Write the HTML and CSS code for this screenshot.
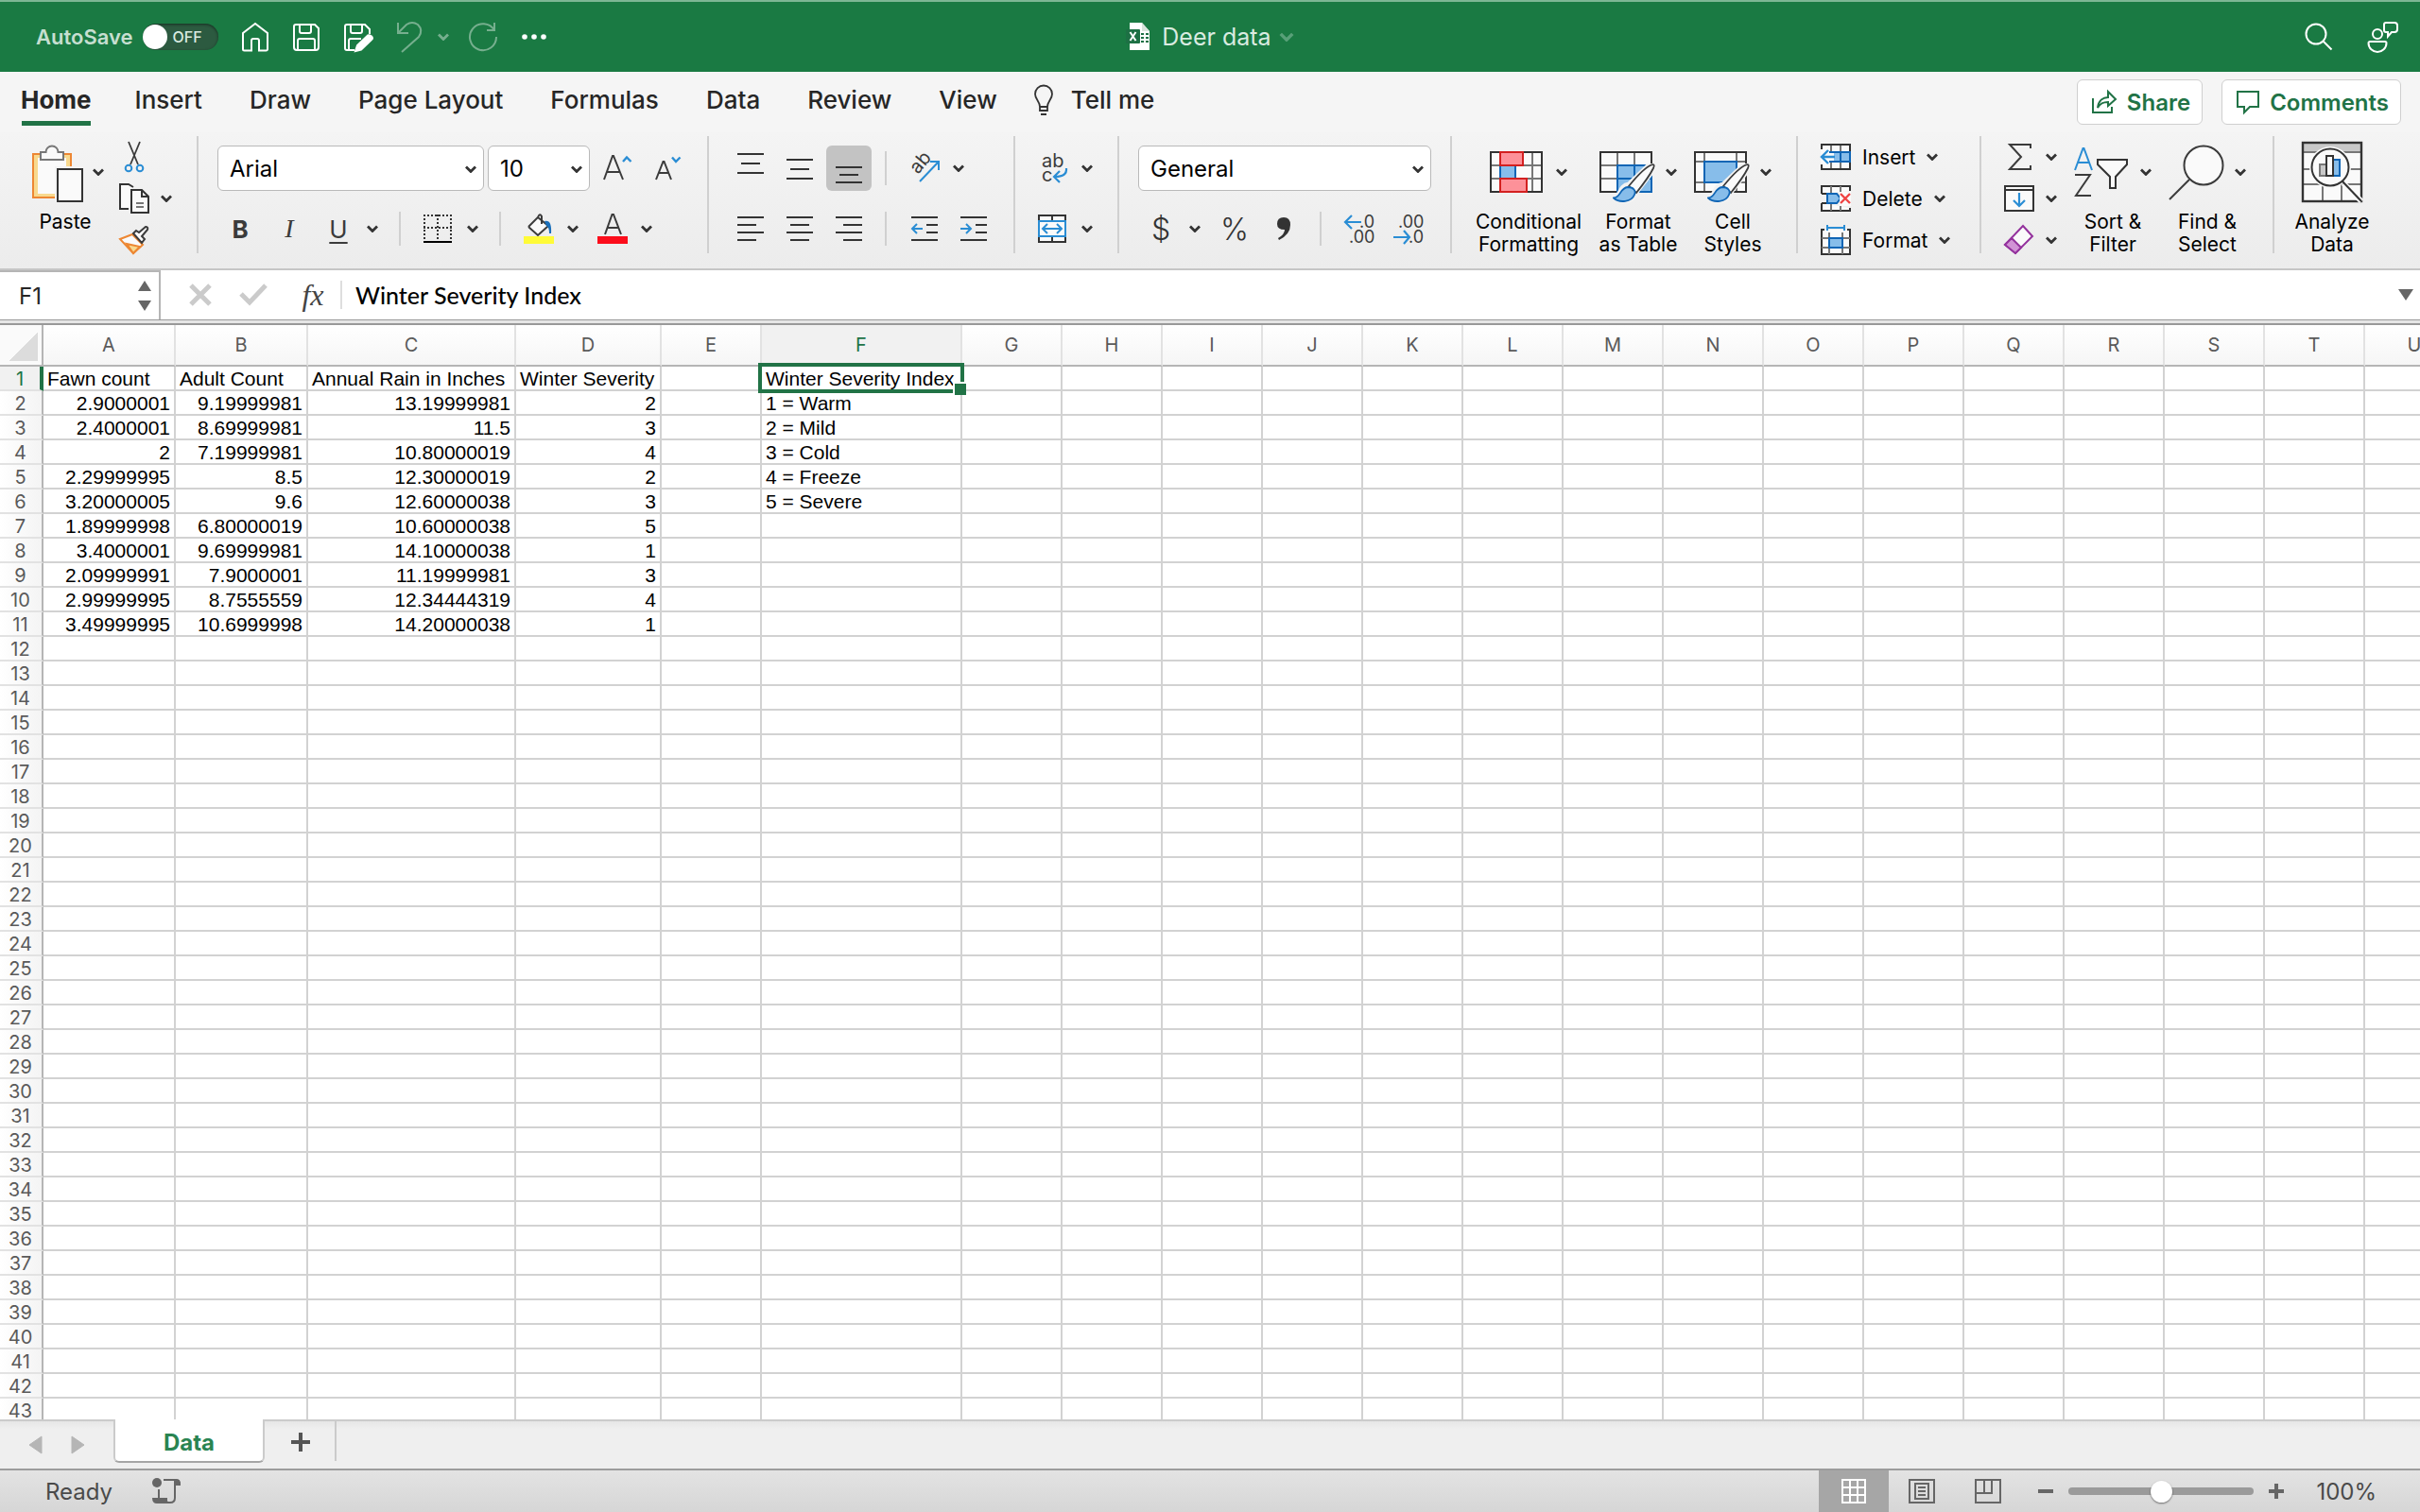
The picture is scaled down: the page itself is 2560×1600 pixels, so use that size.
FILE: index.html
```html
<!DOCTYPE html>
<html lang="en">
<head>
    <meta charset="UTF-8">
    <meta name="viewport" content="width=device-width, initial-scale=1.0">
    <title>Deer data</title>
    <link rel="stylesheet" href="styles.css">
</head>
<body>

<svg class="defs" width="0" height="0" aria-hidden="true">
    <symbol id="chev" viewBox="0 0 12 8"><path d="M1 1.5 6 6.5 11 1.5" fill="none" stroke="currentColor" stroke-width="2.8"/></symbol>
    <symbol id="brush" viewBox="0 0 46 42">
        <path d="M2 36C8 36 7 23 17 22L38 2C44-2 46 2 43 7L26 29C25 40 10 43 2 36z" fill="#f2f2f2" stroke="#f2f2f2" stroke-width="5"/>
        <path d="M17 24C26 13 34 4 41 1.500Q45 0 43 5C40 11 33 21 25 31z" fill="#fafafa" stroke="#3b3b3b" stroke-width="1.800"/>
        <path d="M1 36.500C9 36 7 26 16 25 22 25 25 29 23 33 20 41 7 42 1 36.500z" fill="#87bdea" stroke="#0f65b5" stroke-width="1.800"/>
    </symbol>
</svg>

<header class="titlebar">
    <div class="quick">
        <label class="autosave" for="autosave">AutoSave</label>
        <span class="switch"><input type="checkbox" id="autosave"><span class="switch-text">OFF</span></span>
        <button aria-label="Home"><svg width="30" height="32" viewBox="0 0 30 32"><path d="M2 12 15 2 28 12V29a1.500 1.500 0 0 1-1.500 1.500H19V20a2 2 0 0 0-2-2h-4a2 2 0 0 0-2 2V30.500H3.500A1.500 1.500 0 0 1 2 29z"/></svg></button>
        <button aria-label="Save"><svg width="30" height="32" viewBox="0 0 30 32"><path d="M4 3H24L28 7V27a3 3 0 0 1-3 3H5a3 3 0 0 1-3-3V5a2 2 0 0 1 2-2zM8 3V10a2 2 0 0 0 2 2h8a2 2 0 0 0 2-2V3M6 30V20a2 2 0 0 1 2-2H22a2 2 0 0 1 2 2V30"/></svg></button>
        <button aria-label="Save as"><svg width="32" height="32" viewBox="0 0 32 32"><path d="M12 30H4a2 2 0 0 1-2-2V5a2 2 0 0 1 2-2H23L28 8V13M8 3V10a2 2 0 0 0 2 2h8a2 2 0 0 0 2-2V3M6 30V20a2 2 0 0 1 2-2H19"/><path d="M13 31 15 25 26 14.500Q28 13.500 30 15.500T30 19L19 29.500z" fill="#fff"/></svg></button>
        <button class="dim undo" aria-label="Undo"><svg width="28" height="34" viewBox="0 0 28 34"><path d="M2 2V13H13M2 13 11 4Q17 0 23 4 29 10 24 17L6 33"/></svg><svg class="chev"><use href="#chev"/></svg></button>
        <button class="dim" aria-label="Redo"><svg width="32" height="32" viewBox="0 0 32 32"><path d="M28 1V9H20M28 9A14 14 0 1 0 30 16"/></svg></button>
        <button aria-label="More"><svg width="28" height="8" viewBox="0 0 28 8"><g fill="#fff" stroke="none"><circle cx="4" cy="4" r="2.800"/><circle cx="14" cy="4" r="2.800"/><circle cx="24" cy="4" r="2.800"/></g></svg></button>
    </div>
    <div class="doc-title">
        <svg width="26" height="32" viewBox="0 0 26 32"><path d="M4 1H17L25 10V30H4z" fill="#fff" stroke="none"/><path d="M17 1V10H25z" fill="#d8e4dc" stroke="none"/><path d="M16 13h3M21 13h3M16 17h3M21 17h3M16 21h3M21 21h3" stroke="#1d7044" stroke-width="2"/><rect x="0" y="8" width="15" height="15" rx="1" fill="#1d7044" stroke="none"/><path d="M4.500 11 10.500 20M10.500 11 4.500 20" stroke="#fff" stroke-width="2"/></svg>
        <span>Deer data</span>
        <svg class="title-chev"><use href="#chev"/></svg>
    </div>
    <div class="account">
        <button aria-label="Search"><svg width="30" height="30" viewBox="0 0 30 30"><circle cx="12" cy="12" r="10.500"/><path d="M19.500 19.500 28.500 28.500"/></svg></button>
        <button aria-label="Presence"><svg width="34" height="34" viewBox="0 0 34 34"><circle cx="11" cy="14" r="5"/><path d="M3 22H19a1.500 1.500 0 0 1 1.500 1.500C20.500 29 16 33 11 33S1.500 29 1.500 23.500A1.500 1.500 0 0 1 3 22zM20 2H29a3 3 0 0 1 3 3V9a3 3 0 0 1-3 3H26L22 16.500V12H20a2 2 0 0 1-2-2V4a2 2 0 0 1 2-2z"/></svg></button>
    </div>
</header>

<nav class="tabs">
    <button class="tab active">Home</button>
    <button class="tab">Insert</button>
    <button class="tab">Draw</button>
    <button class="tab">Page Layout</button>
    <button class="tab">Formulas</button>
    <button class="tab">Data</button>
    <button class="tab">Review</button>
    <button class="tab">View</button>
    <button class="tab tell"><svg width="22" height="34" viewBox="0 0 22 34"><path d="M7 24C7 18 2 16 2 10.500a9 9 0 0 1 18 0C20 16 15 18 15 24zM7 24v4h8v-4M8 32h6" fill="none" stroke="#333" stroke-width="1.800"/></svg>Tell me</button>
    <div class="tab-actions">
        <button class="pill"><svg width="28" height="26" viewBox="0 0 28 26"><path d="M2 9V24H22V18M7 19C8 11 13 8 18 8V2L26 10 18 17V13C13 13 10 14 7 19z"/></svg>Share</button>
        <button class="pill"><svg width="26" height="26" viewBox="0 0 26 26"><path d="M2 2H24V18H15L9 24V18H2z"/></svg>Comments</button>
    </div>
</nav>

<section class="ribbon">
    <div class="group group-clipboard">
        <button class="big">
            <span class="big-icon">
                <svg width="60" height="64" viewBox="0 0 60 64"><rect x="7" y="13" width="40" height="46" fill="#f8d98e" stroke="#ed8733" stroke-width="2"/><rect x="12" y="17" width="30" height="38" fill="#fafafa"/><path d="M15 19H39V11H33.500A6 6 0 0 0 20.500 11H15z" fill="#fafafa" stroke="#777" stroke-width="2"/><rect x="30" y="26" width="30" height="38" fill="#f3f3f3"/><rect x="33" y="29" width="26" height="34" fill="#fafafa" stroke="#333" stroke-width="2"/></svg>
                <svg class="chev"><use href="#chev"/></svg>
            </span>
            Paste
        </button>
        <div class="stack">
            <button aria-label="Cut"><svg width="32" height="32" viewBox="0 0 32 32" fill="none"><path d="M10 0 20 24M22 0 12 24" stroke="#3b3b3b" stroke-width="1.800"/><circle cx="10" cy="28" r="3.300" stroke="#2a8dd4" stroke-width="2"/><circle cx="22" cy="28" r="3.300" stroke="#2a8dd4" stroke-width="2"/></svg></button>
            <button aria-label="Copy"><svg width="32" height="32" viewBox="0 0 32 32" fill="none" stroke="#333" stroke-width="2"><path d="M10 27H1V1H10L15 4" fill="#fafafa"/><path d="M13 7H24L31 14V31H13z" fill="#fafafa"/><path d="M24 7V14H31"/><path d="M18 21H26M18 25H26" stroke="#777"/></svg><svg class="chev"><use href="#chev"/></svg></button>
            <button aria-label="Format painter"><svg width="32" height="32" viewBox="0 0 32 32" fill="none" stroke-width="2"><path d="M1 15 14 10 25 21 15 30z" fill="#fafafa" stroke="#ed8733"/><path d="M8 20 22 23 15 30z" fill="#f8d98e" stroke="#ed8733"/><path d="M15 9 18 6 21 8 28 2Q31 2 30 5L24 12 27 15 24 19z" fill="#fafafa" stroke="#3b3b3b"/></svg></button>
        </div>
    </div>

    <div class="group group-font rows">
        <div class="row">
            <span class="pick pick-font"><select aria-label="Font"><option>Arial</option></select><svg class="chev"><use href="#chev"/></svg></span>
            <span class="pick pick-size"><select aria-label="Font size"><option>10</option></select><svg class="chev"><use href="#chev"/></svg></span>
            <button class="tool" aria-label="Increase font size"><svg width="32" height="32" viewBox="0 0 32 32" fill="none"><path d="M3 28 12 3H13L23 28M6 20H19" stroke="#3b3b3b" stroke-width="2"/><path d="M23 9 27 4.500 31.500 9" stroke="#2a8dd4" stroke-width="2.400"/></svg></button>
            <button class="tool" aria-label="Decrease font size"><svg width="32" height="32" viewBox="0 0 32 32" fill="none"><path d="M6 28 13.500 9H14.500L22 28M9 21H19" stroke="#3b3b3b" stroke-width="2"/><path d="M23 4.500 27 9 31.500 4.500" stroke="#2a8dd4" stroke-width="2.400"/></svg></button>
        </div>
        <div class="row">
            <button class="tool letter bold">B</button>
            <button class="tool letter italic">I</button>
            <button class="split"><span class="letter underline">U</span><svg class="chev"><use href="#chev"/></svg></button>
            <span class="bar"></span>
            <button class="split" aria-label="Borders"><svg width="32" height="32" viewBox="0 0 32 32" fill="none" stroke="#333" stroke-width="2"><path d="M0 2H30M0 15H30M1 1V28M15 1V28M29 1V28" stroke-dasharray="2 2"/><path d="M0 30H30" stroke="#000"/></svg><svg class="chev"><use href="#chev"/></svg></button>
            <span class="bar"></span>
            <button class="split" aria-label="Fill color"><svg width="32" height="32" viewBox="0 0 32 32"><path d="M5 14 15 4Q17-1 19 3V11M15 4 26 13 15 23 5 14" fill="#fafafa" stroke="#3b3b3b" stroke-width="2"/><path d="M22 8Q30 6 29 21L27 21Q27 14 24 13z" fill="#1a6fba"/><rect y="24" width="32" height="8" fill="#fffb38"/></svg><svg class="chev"><use href="#chev"/></svg></button>
            <button class="split" aria-label="Font color"><svg width="32" height="32" viewBox="0 0 32 32"><path d="M8 22 15.500 1H17L25 22M11 15H22" fill="none" stroke="#3b3b3b" stroke-width="2"/><rect y="24" width="32" height="8" fill="#fc0d1b"/></svg><svg class="chev"><use href="#chev"/></svg></button>
        </div>
    </div>

    <div class="group group-align rows">
        <div class="row">
            <button class="tool" aria-label="Top align"><svg class="lines" viewBox="0 0 28 32"><path d="M0 1H28M4 11H24M0 21H28"/></svg></button>
            <button class="tool" aria-label="Middle align"><svg class="lines" viewBox="0 0 28 32"><path d="M0 7H28M4 17H24M0 27H28"/></svg></button>
            <button class="tool pressed" aria-label="Bottom align"><svg class="lines" viewBox="0 0 28 32"><path d="M0 15H28M4 23H24M0 31H28"/></svg></button>
            <span class="bar"></span>
            <button class="split" aria-label="Orientation"><svg width="32" height="32" viewBox="0 0 32 32"><text transform="translate(9 23) rotate(-50)" class="ab">ab</text><path d="M11 30 31 9M22 9H31V18" fill="none" stroke="#2a8dd4" stroke-width="2"/></svg><svg class="chev"><use href="#chev"/></svg></button>
        </div>
        <div class="row">
            <button class="tool" aria-label="Align left"><svg class="lines" viewBox="0 0 28 32"><path d="M0 4H28M0 12H20M0 20H28M0 28H20"/></svg></button>
            <button class="tool" aria-label="Center"><svg class="lines" viewBox="0 0 28 32"><path d="M0 4H28M4 12H24M0 20H28M4 28H24"/></svg></button>
            <button class="tool" aria-label="Align right"><svg class="lines" viewBox="0 0 28 32"><path d="M0 4H28M8 12H28M0 20H28M8 28H28"/></svg></button>
            <span class="bar"></span>
            <button class="tool" aria-label="Decrease indent"><svg class="lines" viewBox="0 0 28 32"><path d="M0 4H28M16 12H28M16 20H28M0 28H28"/><path class="blue" d="M12 16H1M6 11 1 16 6 21"/></svg></button>
            <button class="tool" aria-label="Increase indent"><svg class="lines" viewBox="0 0 28 32"><path d="M0 4H28M16 12H28M16 20H28M0 28H28"/><path class="blue" d="M0 16H11M6 11 11 16 6 21"/></svg></button>
        </div>
    </div>

    <div class="group group-wrap rows">
        <div class="row">
            <button class="split" aria-label="Wrap text"><svg width="32" height="32" viewBox="0 0 32 32"><text x="4" y="15" class="ab">ab</text><text x="4" y="30" class="ab">c</text><path d="M30 16Q31 25 18 25M23 19 17 25 23 31" fill="none" stroke="#2a8dd4" stroke-width="2.200"/></svg><svg class="chev"><use href="#chev"/></svg></button>
        </div>
        <div class="row">
            <button class="split" aria-label="Merge"><svg width="32" height="32" viewBox="0 0 32 32" fill="none" stroke="#333" stroke-width="2"><path d="M1 2H29V30H1zM15 2V8M15 24V30" fill="#fafafa"/><rect x="1" y="8" width="28" height="16" fill="#fafafa" stroke="#2a8dd4"/><path d="M5 16H25M10 11 5 16 10 21M20 11 25 16 20 21" stroke="#2a8dd4"/></svg><svg class="chev"><use href="#chev"/></svg></button>
        </div>
    </div>

    <div class="group group-number rows">
        <div class="row">
            <span class="pick pick-number"><select aria-label="Number format"><option>General</option></select><svg class="chev"><use href="#chev"/></svg></span>
        </div>
        <div class="row">
            <button class="split"><span class="symbol">$</span><svg class="chev"><use href="#chev"/></svg></button>
            <button class="tool symbol">%</button>
            <button class="tool" aria-label="Comma style"><svg width="16" height="26" viewBox="0 0 16 26"><path d="M8 1Q15 1 15 9 15 19 3 25L2 23Q9 19 9 14 1 14 1 8 1 1 8 1z" fill="#333"/></svg></button>
            <span class="bar"></span>
            <button class="tool" aria-label="Increase decimal"><svg width="32" height="32" viewBox="0 0 32 32"><text x="16" y="15" class="dec">.0</text><text x="5" y="31" class="dec">.00</text><path d="M18 9H1M8 2 1 9 8 16" fill="none" stroke="#2a8dd4" stroke-width="2.200"/></svg></button>
            <button class="tool" aria-label="Decrease decimal"><svg width="32" height="32" viewBox="0 0 32 32"><text x="5" y="15" class="dec">.00</text><text x="16" y="31" class="dec">.0</text><path d="M0 25H17M11 18 17 25 11 32" fill="none" stroke="#2a8dd4" stroke-width="2.200"/></svg></button>
        </div>
    </div>

    <div class="group group-styles">
        <button class="big wide">
            <span class="big-icon">
                <svg width="60" height="64" viewBox="0 0 60 64" fill="none" stroke-width="2"><rect x="1" y="11" width="54" height="42" fill="#fafafa"/><path d="M1 25H55M1 39H55M11 11V53M45 11V53" stroke="#777"/><rect x="1" y="11" width="54" height="42" stroke="#333"/><rect x="11" y="25" width="16" height="14" fill="#87bdea" stroke="#0f65b5"/><rect x="11" y="11" width="24" height="14" fill="#fd9199" stroke="#d32020"/><rect x="11" y="39" width="28" height="14" fill="#fd9199" stroke="#d32020"/></svg>
                <svg class="chev"><use href="#chev"/></svg>
            </span>
            Conditional<br>Formatting
        </button>
        <button class="big">
            <span class="big-icon">
                <svg width="60" height="64" viewBox="0 0 60 64" fill="none" stroke-width="2"><rect x="1" y="11" width="54" height="42" fill="#fafafa"/><path d="M1 25H55M1 39H19M19 11V25M37 11V25" stroke="#777"/><rect x="1" y="11" width="54" height="42" stroke="#333"/><path d="M19 25H55V53H19zM37 25V53M19 39H55" fill="#87bdea" stroke="#0f65b5"/><use href="#brush" x="14" y="23" width="46" height="42"/></svg>
                <svg class="chev"><use href="#chev"/></svg>
            </span>
            Format<br>as Table
        </button>
        <button class="big">
            <span class="big-icon">
                <svg width="60" height="64" viewBox="0 0 60 64" fill="none" stroke-width="2"><rect x="1" y="11" width="54" height="42" fill="#fafafa"/><path d="M1 21H55M1 43H55M11 11V53M45 11V53" stroke="#777"/><rect x="1" y="11" width="54" height="42" stroke="#333"/><rect x="11" y="21" width="34" height="22" fill="#87bdea" stroke="#0f65b5"/><use href="#brush" x="14" y="23" width="46" height="42"/></svg>
                <svg class="chev"><use href="#chev"/></svg>
            </span>
            Cell<br>Styles
        </button>
    </div>

    <div class="group group-cells">
        <div class="stack">
            <button><svg width="32" height="32" viewBox="0 0 32 32" fill="none" stroke-width="2"><rect x="1" y="3" width="30" height="26" fill="#fafafa"/><path d="M11 3V29M21 3V29" stroke="#777"/><rect x="1" y="3" width="30" height="26" stroke="#333"/><rect x="10" y="11" width="21" height="10" fill="#87bdea" stroke="#0f65b5"/><path d="M21 11V21" stroke="#0f65b5"/><path d="M0 8H9V12H14V20H9V24H0z" fill="#fafafa"/><path d="M15 16H1M8 9 1 16 8 23" stroke="#2a8dd4" stroke-width="2.400"/></svg>Insert<svg class="chev"><use href="#chev"/></svg></button>
            <button><svg width="32" height="32" viewBox="0 0 32 32" fill="none" stroke-width="2"><path d="M1 11V3H31V8M1 21V29H31V26" fill="#fafafa" stroke="#333"/><path d="M11 3V29M21 3V29" stroke="#777"/><path d="M1 11H8M1 21H8" stroke="#333"/><path d="M7 11H17L21 16 17 21H7z" fill="#87bdea" stroke="#0f65b5"/><path d="M20 9H32V24H20z" fill="#fafafa"/><path d="M21 11 31 21M31 11 21 21" stroke="#ef4444" stroke-width="2.400"/></svg>Delete<svg class="chev"><use href="#chev"/></svg></button>
            <button><svg width="32" height="32" viewBox="0 0 32 32" fill="none" stroke-width="2"><path d="M4 5H1V31H31V5H28" fill="#fafafa" stroke="#333"/><path d="M1 14H31M1 24H31M9 8V31M23 8V31" stroke="#777"/><rect x="9" y="14" width="14" height="10" fill="#87bdea" stroke="#0f65b5"/><path d="M7 0V6M25 0V6M7 3H25" stroke="#2a8dd4"/></svg>Format<svg class="chev"><use href="#chev"/></svg></button>
        </div>
    </div>

    <div class="group group-editing">
        <div class="stack">
            <button aria-label="AutoSum"><svg width="32" height="32" viewBox="0 0 32 32" fill="none" stroke="#3b3b3b" stroke-width="2"><path d="M28 7V3H6L18 16 6 29H28V25"/></svg><svg class="chev"><use href="#chev"/></svg></button>
            <button aria-label="Fill"><svg width="32" height="32" viewBox="0 0 32 32" fill="none" stroke="#333" stroke-width="2"><rect x="1" y="3" width="30" height="26" fill="#fafafa"/><path d="M1 7H31"/><path d="M16 10V24M10 18 16 24 22 18" stroke="#2a8dd4" stroke-width="2.200"/></svg><svg class="chev"><use href="#chev"/></svg></button>
            <button aria-label="Clear"><svg width="32" height="32" viewBox="0 0 32 32" stroke="#94329d" stroke-width="2"><path d="M20 1 30 12 12 30 1 21z" fill="#fafafa"/><path d="M8 14 18 24 12 30 1 21z" fill="#d193d5"/></svg><svg class="chev"><use href="#chev"/></svg></button>
        </div>
        <button class="big">
            <span class="big-icon">
                <svg width="60" height="64" viewBox="0 0 60 64" fill="none" stroke-width="2"><path d="M1 30 9.500 7H10.500L19 30M4 22H16" stroke="#2a8dd4"/><path d="M1 35H17L2 57H18" stroke="#3b3b3b"/><path d="M25 19H56V24L44 37V49H38V37L25 24z" fill="#fafafa" stroke="#333"/></svg>
                <svg class="chev"><use href="#chev"/></svg>
            </span>
            Sort &amp;<br>Filter
        </button>
        <button class="big">
            <span class="big-icon">
                <svg width="60" height="64" viewBox="0 0 60 64" stroke="#3b3b3b" stroke-width="2"><circle cx="37" cy="25" r="20.500" fill="#fafafa"/><path d="M22 40 1 61"/></svg>
                <svg class="chev"><use href="#chev"/></svg>
            </span>
            Find &amp;<br>Select
        </button>
    </div>

    <div class="group group-analyze">
        <button class="big">
            <span class="big-icon">
                <svg width="64" height="64" viewBox="0 0 64 64" fill="none" stroke-width="2"><rect x="1" y="1" width="62" height="62" fill="#fafafa"/><rect x="1" y="1" width="62" height="10" fill="#c8c8c8"/><path d="M1 11H63M1 29H63M1 45H63M22 45V63M42 45V63" stroke="#777"/><rect x="1" y="1" width="62" height="62" stroke="#333" stroke-width="2.400"/><circle cx="30" cy="27" r="22" fill="#fafafa"/><path d="M44 44 63 63" stroke="#fafafa" stroke-width="6"/><circle cx="30" cy="27" r="19.500" stroke="#333"/><path d="M43 42 63 63" stroke="#333"/><path d="M19 24H26V36H19z" fill="#c8c8c8" stroke="#777"/><path d="M33 19H40V36H33z" fill="#87bdea" stroke="#0f65b5"/><path d="M26 15H33V36H26z" fill="#fafafa" stroke="#333"/></svg>
            </span>
            Analyze<br>Data
        </button>
    </div>
</section>

<section class="formula-bar">
    <div class="name-box">
        <input type="text" aria-label="Name box" value="F1">
        <svg width="14" height="34" viewBox="0 0 14 34"><path d="M7 1 14 12H0zM7 33 14 22H0z" fill="#666"/></svg>
    </div>
    <button aria-label="Cancel"><svg width="24" height="24" viewBox="0 0 24 24"><path d="M2 2 22 22M22 2 2 22" stroke="#cbcbcb" stroke-width="5"/></svg></button>
    <button aria-label="Enter"><svg width="30" height="24" viewBox="0 0 30 24"><path d="M2 11 11 20 28 2" fill="none" stroke="#cbcbcb" stroke-width="5"/></svg></button>
    <button class="fx">fx</button>
    <input class="formula" type="text" aria-label="Formula" value="Winter Severity Index">
    <button class="expand" aria-label="Expand"><svg width="16" height="12" viewBox="0 0 16 12"><path d="M0 0H16L8 12z" fill="#666"/></svg></button>
</section>

<main class="sheet">
    <table class="grid" id="grid"></table>
</main>

<footer>
    <div class="sheets">
        <button class="nav-arrow" aria-label="Previous sheet"><svg width="14" height="20" viewBox="0 0 14 20"><path d="M14 1V19L1 10z" fill="#b5b5b5" stroke="#b5b5b5"/></svg></button>
        <button class="nav-arrow" aria-label="Next sheet"><svg width="14" height="20" viewBox="0 0 14 20"><path d="M0 1V19L13 10z" fill="#b5b5b5" stroke="#b5b5b5"/></svg></button>
        <button class="sheet-tab">Data</button>
        <button class="add" aria-label="New sheet"><svg width="20" height="20" viewBox="0 0 20 20"><path d="M10 0V20M0 10H20" stroke="#555" stroke-width="4"/></svg></button>
    </div>
    <div class="status">
        <span class="ready">Ready</span>
        <svg width="30" height="30" viewBox="0 0 30 30"><circle cx="5" cy="6" r="5" fill="#666"/><path d="M12 3H26Q29 3 29 8H24V22Q24 27 19 27H6M7 13V24" fill="none" stroke="#666" stroke-width="2"/><path d="M0 22H16V25Q17 28 19 28H5Q0 28 0 22zM23 3Q30 1 30 8H23z" fill="#666"/></svg>
        <div class="views">
            <button class="view active" aria-label="Normal view"><svg width="28" height="28" viewBox="0 0 28 28"><path d="M2 2H26V26H2zM10 2V26M18 2V26M2 10H26M2 18H26" fill="none" stroke="#fff" stroke-width="2"/></svg></button>
            <button class="view" aria-label="Page layout view"><svg width="28" height="28" viewBox="0 0 28 28"><path d="M1 2H27V26H1zM7 6H21V22H7zM10 10H18M10 14H18M10 18H18" fill="none" stroke="#666" stroke-width="2"/></svg></button>
            <button class="view" aria-label="Page break view"><svg width="28" height="28" viewBox="0 0 28 28"><path d="M1 2H27V26H1zM1 16H18V2M10 2V16" fill="none" stroke="#666" stroke-width="2"/></svg></button>
        </div>
        <div class="zoom">
            <button aria-label="Zoom out"><svg width="16" height="16" viewBox="0 0 16 16"><path d="M0 8H16" stroke="#666" stroke-width="4"/></svg></button>
            <input type="range" aria-label="Zoom" min="0" max="200" value="100">
            <button aria-label="Zoom in"><svg width="16" height="16" viewBox="0 0 16 16"><path d="M0 8H16M8 0V16" stroke="#666" stroke-width="4"/></svg></button>
            <span class="percent">100%</span>
        </div>
    </div>
</footer>

<script>
    const letters = "ABCDEFGHIJKLMNOPQRSTUVWXYZ".split("");
    const widths = { A: 140, B: 140, C: 220, D: 154, F: 212 };
    const rowCount = 60;
    const data = [
        ["Fawn count", "Adult Count", "Annual Rain in Inches", "Winter Severity", "", "Winter Severity Index"],
        ["2.9000001", "9.19999981", "13.19999981", "2", "", "1 = Warm"],
        ["2.4000001", "8.69999981", "11.5", "3", "", "2 = Mild"],
        ["2", "7.19999981", "10.80000019", "4", "", "3 = Cold"],
        ["2.29999995", "8.5", "12.30000019", "2", "", "4 = Freeze"],
        ["3.20000005", "9.6", "12.60000038", "3", "", "5 = Severe"],
        ["1.89999998", "6.80000019", "10.60000038", "5"],
        ["3.4000001", "9.69999981", "14.10000038", "1"],
        ["2.09999991", "7.9000001", "11.19999981", "3"],
        ["2.99999995", "8.7555559", "12.34444319", "4"],
        ["3.49999995", "10.6999998", "14.20000038", "1"]
    ];

    let html = '<colgroup><col style="width:46px">';
    letters.forEach(l => { html += `<col style="width:${widths[l] || 106}px">`; });
    html += '</colgroup><thead><tr><th class="corner"></th>';
    letters.forEach(l => { html += `<th scope="col"${l === "F" ? ' class="current"' : ''}>${l}</th>`; });
    html += '</tr></thead><tbody>';

    for (let r = 0; r < rowCount; r++) {
        html += `<tr><th scope="row"${r === 0 ? ' class="current"' : ''}>${r + 1}</th>`;
        letters.forEach((l, c) => {
            const value = (data[r] && data[r][c]) || "";
            let cls = "";
            if (value !== "" && !isNaN(value)) cls = ' class="num"';
            if (r === 0 && l === "F") cls = ' class="selected"';
            html += `<td${cls}>${value}</td>`;
        });
        html += '</tr>';
    }
    document.getElementById("grid").innerHTML = html + '</tbody>';
</script>
</body>
</html>
```
FILE: styles.css
```css
* {
    box-sizing: border-box;
}
body {
    display: flex;
    flex-direction: column;
    height: 100vh;
    margin: 0;
    overflow: hidden;
    font-family: Inter, "Liberation Sans", sans-serif;
    font-size: 21px;
    color: #000;
    background-color: #fff;
}
button, input, select {
    font: inherit;
    color: inherit;
    margin: 0;
    padding: 0;
    border: none;
    background: none;
}
svg {
    display: block;
    flex: none;
    overflow: visible;
}
.defs {
    position: absolute;
}
.chev {
    width: 12px;
    height: 8px;
    color: #333;
}

/* title bar */
.titlebar {
    display: grid;
    grid-template-columns: 1fr auto 1fr;
    align-items: center;
    height: 76px;
    border-top: 2px solid #7db794;
    background-color: #1a7a43;
    color: #d9ebe0;
}
.titlebar svg {
    fill: none;
    stroke: #fff;
    stroke-width: 2;
}
.quick {
    display: flex;
    align-items: center;
    gap: 24px;
    padding-left: 38px;
}
.autosave {
    font-size: 22px;
    font-weight: 600;
    color: #c6dfd0;
    margin-right: -14px;
}
.switch {
    position: relative;
    width: 80px;
    height: 28px;
}
.switch input {
    appearance: none;
    display: block;
    width: 80px;
    height: 28px;
    border-radius: 14px;
    background-color: #2c5a40;
    box-shadow: inset 0 1px 3px rgba(0, 0, 0, 0.5);
}
.switch input::before {
    content: "";
    display: block;
    width: 26px;
    height: 26px;
    margin-top: 1px;
    border-radius: 50%;
    background-color: #fff;
}
.switch-text {
    position: absolute;
    top: 4px;
    left: 32px;
    font-size: 16px;
    line-height: 20px;
    font-weight: 500;
}
.dim {
    opacity: 0.4;
}
.undo {
    display: flex;
    align-items: center;
    gap: 16px;
    margin-right: -4px;
}
.undo .chev {
    color: #fff;
}
.titlebar .chev, .titlebar .title-chev {
    stroke: none;
}
.doc-title {
    display: flex;
    align-items: center;
    gap: 12px;
    font-size: 25px;
}
.title-chev {
    width: 16px;
    height: 10px;
    margin-left: -4px;
    color: #58a078;
}
.account {
    display: flex;
    justify-content: flex-end;
    align-items: center;
    gap: 36px;
    padding-right: 22px;
}

/* tabs */
.tabs {
    display: flex;
    align-items: flex-start;
    gap: 50px;
    height: 64px;
    padding: 8px 20px 0 22px;
    background-color: #f5f5f5;
}
.tab {
    height: 44px;
    font-size: 26px;
    font-weight: 500;
    line-height: 40px;
    color: #262626;
}
.tab.active {
    margin-right: -4px;
    font-weight: 700;
    box-shadow: 0 6px 0 -1px #217346;
}
.tell {
    display: flex;
    align-items: center;
    gap: 18px;
    margin-left: -12px;
}
.tab-actions {
    display: flex;
    gap: 20px;
    margin-left: auto;
}
.pill {
    display: flex;
    align-items: center;
    gap: 10px;
    height: 48px;
    padding: 0 12px 0 14px;
    border: 1px solid #cfcfcf;
    border-radius: 6px;
    background-color: #fff;
    font-size: 24px;
    font-weight: 600;
    color: #217346;
}
.pill svg {
    fill: none;
    stroke: #217346;
    stroke-width: 2;
}

/* ribbon */
.ribbon {
    display: flex;
    height: 146px;
    padding-top: 4px;
    border-bottom: 2px solid #c6c6c6;
    background: linear-gradient(#f4f4f4, #ececec);
}
.group {
    display: flex;
    flex: none;
    gap: 18px;
    height: 124px;
    border-right: 2px solid #d0d0d0;
}
.group-clipboard {
    gap: 16px;
    width: 210px;
    padding-left: 28px;
}
.group-font {
    width: 540px;
    padding-left: 20px;
}
.group-align {
    width: 324px;
    padding-left: 20px;
}
.group-wrap {
    width: 110px;
    padding-left: 16px;
}
.group-number {
    width: 352px;
    padding-left: 20px;
}
.group-styles {
    width: 366px;
    padding-left: 24px;
}
.group-cells {
    width: 194px;
    padding-left: 24px;
}
.group-editing {
    width: 310px;
    padding-left: 24px;
}
.group-analyze {
    padding-left: 20px;
    border-right: none;
}
.rows {
    flex-direction: column;
    gap: 16px;
    padding-top: 10px;
}
.row {
    display: flex;
    flex: none;
    align-items: center;
    gap: 4px;
    height: 48px;
}
.tool, .split {
    display: flex;
    align-items: center;
    justify-content: center;
    width: 48px;
    height: 48px;
    border-radius: 6px;
}
.split {
    justify-content: flex-start;
    gap: 14px;
    width: 74px;
    padding-left: 8px;
}
.pressed {
    background-color: #c3c3c3;
}
.bar {
    width: 2px;
    height: 36px;
    margin: 0 12px 0 10px;
    background-color: #d0d0d0;
}
.letter {
    font-size: 26px;
    color: #3b3b3b;
}
.bold {
    font-weight: 700;
}
.italic {
    font-family: "Liberation Serif", serif;
    font-size: 28px;
    font-style: italic;
}
.underline {
    width: 32px;
    text-align: center;
    text-decoration: underline;
    text-underline-offset: 4px;
}
.symbol {
    min-width: 32px;
    font-size: 32px;
    font-weight: 300;
    text-align: center;
    color: #333;
}
.lines {
    width: 28px;
    height: 32px;
    fill: none;
    stroke: #333;
    stroke-width: 2;
}
.lines .blue {
    stroke: #2a8dd4;
}
.ab {
    font-size: 20px;
    fill: #3b3b3b;
}
.dec {
    font-size: 18px;
    fill: #3b3b3b;
}
.pick {
    position: relative;
    height: 48px;
}
.pick select {
    appearance: none;
    width: 100%;
    height: 48px;
    padding: 0 12px;
    border: 1px solid #b9b9b9;
    border-radius: 6px;
    background-color: #fff;
    font-size: 24px;
}
.pick .chev {
    position: absolute;
    top: 21px;
    right: 8px;
    pointer-events: none;
}
.pick-font {
    width: 282px;
}
.pick-size {
    width: 108px;
}
.pick-number {
    width: 310px;
}
.big {
    display: flex;
    flex-direction: column;
    align-items: center;
    width: 82px;
    padding-top: 6px;
    line-height: 24px;
    white-space: nowrap;
}
.big.wide {
    width: 114px;
}
.big-icon {
    display: flex;
    align-items: center;
    gap: 10px;
    margin-bottom: 9px;
}
.stack {
    display: flex;
    flex-direction: column;
}
.stack button {
    display: flex;
    flex: none;
    align-items: center;
    gap: 12px;
    height: 44px;
}

/* formula bar */
.formula-bar {
    display: flex;
    align-items: center;
    height: 58px;
    padding-bottom: 6px;
    background: linear-gradient(#fff 52px, #999 52px, #999 53px, #e6e6e6 53px, #e6e6e6 56px, #999 56px);
}
.formula-bar button {
    display: flex;
    justify-content: center;
    width: 56px;
}
.name-box {
    display: flex;
    align-items: center;
    width: 170px;
    height: 52px;
    margin-right: 14px;
    padding: 0 8px 0 20px;
    border: 2px solid #b5b5b5;
    border-left: none;
    border-bottom: none;
}
.name-box input {
    flex: 1;
    min-width: 0;
    font-size: 24px;
    color: #262626;
}
.formula-bar .fx {
    width: 64px;
    padding-left: 6px;
    font-family: "Liberation Serif", serif;
    font-size: 32px;
    font-style: italic;
    line-height: 32px;
    color: #444;
}
.formula {
    flex: 1;
    height: 30px;
    padding-left: 14px;
    border-left: 2px solid #dedede;
    font-family: Lato, sans-serif;
    font-size: 25px;
    font-weight: 500;
}
.formula-bar .expand {
    width: 30px;
}

/* sheet */
.sheet {
    flex: 1;
    min-height: 0;
    overflow: hidden;
}
.grid {
    table-layout: fixed;
    width: 1px;
    border-spacing: 0;
    font-family: "Liberation Sans", Arial, sans-serif;
    font-size: 21px;
    line-height: 22px;
}
.grid th {
    padding: 0;
    font-family: Inter, sans-serif;
    font-size: 20px;
    font-weight: 400;
    color: #5a5a5a;
}
.grid thead th {
    height: 44px;
    border-right: 2px solid #e2e2e2;
    border-bottom: 2px solid #b5b5b5;
    background: linear-gradient(#fff, #f6f6f6);
}
.grid thead .corner {
    border-right-color: #b5b5b5;
    background: linear-gradient(135deg, transparent 50%, #dcdcdc 50%) 10px 8px / 30px 30px no-repeat #fafafa;
}
.grid tbody th {
    height: 26px;
    padding: 2px 1px 0 0;
    border-right: 2px solid #b5b5b5;
    border-bottom: 2px solid #e2e2e2;
    background: linear-gradient(to right, #fff, #f4f4f4);
}
.grid thead .current {
    background: #f1f1f1;
    color: #217346;
}
.grid tbody .current {
    padding-right: 0;
    border-right: 4px solid #217346;
    background: #f1f1f1;
    color: #217346;
}
.grid td {
    height: 26px;
    padding: 2px 4px 0;
    border-right: 2px solid #d2d2d2;
    border-bottom: 2px solid #d2d2d2;
    white-space: nowrap;
}
.grid .num {
    text-align: right;
}
.grid .selected {
    position: relative;
}
.selected::before {
    content: "";
    position: absolute;
    inset: -4px;
    border: 4px solid #217346;
}
.selected::after {
    content: "";
    position: absolute;
    right: -6px;
    bottom: -6px;
    width: 12px;
    height: 12px;
    border-top: 2px solid #fff;
    border-left: 2px solid #fff;
    background-color: #217346;
}

/* footer */
.sheets {
    display: flex;
    height: 52px;
    border-top: 2px solid #cbcbcb;
    background: linear-gradient(#e6e6e6, #efefef 8px);
}
.nav-arrow {
    width: 46px;
    padding-left: 16px;
}
.nav-arrow:first-child {
    margin-left: 14px;
}
.sheet-tab {
    width: 160px;
    height: 46px;
    margin: -2px 0 0 14px;
    padding-top: 4px;
    border: 2px solid #cbcbcb;
    border-top: none;
    border-bottom-color: #a5a5a5;
    border-radius: 0 0 6px 6px;
    background-color: #fff;
    font-size: 24px;
    font-weight: 700;
    color: #2a8452;
}
.add {
    width: 76px;
    height: 42px;
    padding: 2px 0 0 28px;
    border-right: 2px solid #cbcbcb;
}
.status {
    display: flex;
    align-items: center;
    height: 46px;
    padding-left: 48px;
    border-top: 2px solid #9c9c9c;
    background: linear-gradient(#e3e3e3, #d6d6d6);
    font-size: 24px;
    color: #4a4a4a;
}
.ready {
    margin-right: 42px;
}
.views {
    display: flex;
    height: 44px;
    margin-left: auto;
}
.view {
    display: flex;
    align-items: center;
    justify-content: center;
    width: 70px;
}
.view.active {
    width: 74px;
    background-color: #a6a6a6;
}
.zoom {
    display: flex;
    align-items: center;
    gap: 16px;
    padding: 0 46px 0 18px;
}
.zoom input {
    appearance: none;
    width: 196px;
    height: 8px;
    border-radius: 4px;
    background-color: #9a9a9a;
}
.zoom input::-webkit-slider-thumb {
    appearance: none;
    width: 23px;
    height: 23px;
    border-radius: 50%;
    background-color: #fff;
    box-shadow: 0 1px 2px rgba(0, 0, 0, 0.5);
}
.percent {
    margin-left: 18px;
}
```
